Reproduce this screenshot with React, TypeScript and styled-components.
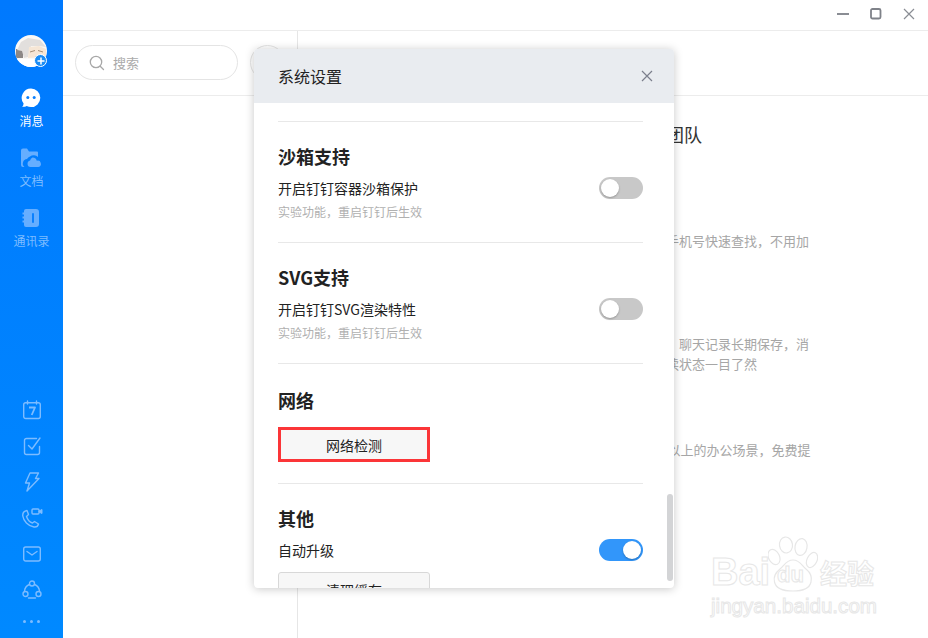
import React from 'react'
import styled, { createGlobalStyle } from 'styled-components'

const GlobalStyle = createGlobalStyle`
  html, body {
    margin: 0;
    padding: 0;
    height: 100%;
    background: #fff;
  }
  body {
    font-family: 'Noto Sans CJK SC', 'Noto Sans', sans-serif;
    color: #222;
    overflow: hidden;
  }
  * {
    box-sizing: border-box;
  }
`

const Window = styled.div`
  position: relative;
  display: flex;
  width: 928px;
  height: 638px;
  overflow: hidden;
  background: #fff;
`

const Sidebar = styled.aside`
  width: 63px;
  flex-shrink: 0;
  display: flex;
  flex-direction: column;
  align-items: center;
  justify-content: space-between;
  padding-top: 35px;
  background: linear-gradient(180deg, #0079fe 0%, #0089ff 100%);
`

const SideTop = styled.div`
  display: flex;
  flex-direction: column;
  align-items: center;
`

const AvatarWrap = styled.div`
  position: relative;
  width: 32px;
  height: 32px;
  margin-bottom: 21px;
`

const AvatarBadge = styled.span`
  position: absolute;
  right: 0;
  bottom: 0;
  width: 13px;
  height: 13px;
  border-radius: 50%;
  background: #1a8cf5;
  border: 1.5px solid #fff;
  display: flex;
  align-items: center;
  justify-content: center;
`

const NavItem = styled.div<{ $active?: boolean }>`
  display: flex;
  flex-direction: column;
  align-items: center;
  height: 60px;
  font-size: 12px;
  line-height: 18px;
  color: ${(p) => (p.$active ? '#fff' : '#7dbcff')};
  svg {
    display: block;
    margin-bottom: 4px;
  }
`

const ToolList = styled.div`
  display: flex;
  flex-direction: column;
  align-items: center;
  padding-bottom: 4px;
`

const Tool = styled.div`
  width: 63px;
  height: 36px;
  display: flex;
  align-items: center;
  justify-content: center;
`

const Dots = styled.div`
  height: 26px;
  display: flex;
  align-items: center;
  gap: 4px;
  span {
    width: 3px;
    height: 3px;
    border-radius: 50%;
    background: #7dbcff;
  }
`

const Content = styled.div`
  flex: 1;
  display: flex;
  flex-direction: column;
`

const TitleBar = styled.div`
  height: 31px;
  flex-shrink: 0;
  display: flex;
  justify-content: flex-end;
  align-items: center;
  gap: 17px;
  padding: 0 11px 3px 0;
  border-bottom: 1px solid #ececec;
`

const WinButton = styled.div`
  width: 16px;
  height: 16px;
  display: flex;
  align-items: center;
  justify-content: center;
`

const Panels = styled.div`
  flex: 1;
  display: flex;
  min-height: 0;
`

const ChatList = styled.div`
  width: 235px;
  flex-shrink: 0;
  border-right: 1px solid #e6e6e6;
`

const SearchRow = styled.div`
  height: 65px;
  display: flex;
  align-items: flex-start;
  gap: 12px;
  padding: 14px 0 0 12px;
  border-bottom: 1px solid #ececec;
  margin-right: -1px;
`

const SearchBox = styled.div`
  width: 163px;
  height: 35px;
  display: flex;
  align-items: center;
  gap: 8px;
  padding-left: 13px;
  border: 1px solid #e4e4e4;
  border-radius: 18px;
  font-size: 13px;
  color: #aaa;
`

const RoundButton = styled.div`
  width: 35px;
  height: 35px;
  border-radius: 50%;
  border: 1px solid #e4e4e4;
  flex-shrink: 0;
`

const MainPanel = styled.main`
  flex: 1;
  display: flex;
  flex-direction: column;
`

const MainHeader = styled.div`
  height: 65px;
  flex-shrink: 0;
  border-bottom: 1px solid #ececec;
`

const MainBody = styled.div`
  padding: 24px 0 0 290px;
`

const MainTitle = styled.h2`
  margin: 0 0 83px 6px;
  font-size: 18px;
  font-weight: 400;
  line-height: 28px;
  color: #333;
  white-space: nowrap;
`

const Paragraph = styled.p<{ $gap: number }>`
  margin: 0 0 ${(p) => p.$gap}px;
  font-size: 13px;
  line-height: 20px;
  color: #a6a6a6;
  white-space: nowrap;
`

const Modal = styled.section`
  position: absolute;
  left: 254px;
  top: 49px;
  width: 420px;
  height: 539px;
  display: flex;
  flex-direction: column;
  background: #fff;
  border-radius: 4px;
  box-shadow: 0 1px 10px rgba(0, 0, 0, 0.22);
  overflow: hidden;
`

const ModalHeader = styled.header`
  height: 54px;
  flex-shrink: 0;
  display: flex;
  align-items: center;
  justify-content: space-between;
  padding: 0 21px 1px 24px;
  background: #e9ecf0;
  font-size: 16px;
  color: #222;
`

const ModalBody = styled.div`
  flex: 1;
  min-height: 0;
  overflow: hidden;
  padding: 18px 31px 0 24px;
`

const Section = styled.div<{ $height: number; $pad?: number }>`
  height: ${(p) => p.$height}px;
  border-top: 1px solid #e8e8e8;
  padding-top: ${(p) => p.$pad ?? 20}px;
`

const SectionTitle = styled.h3`
  margin: 0;
  font-size: 18px;
  font-weight: 700;
  line-height: 28px;
  color: #222;
`

const OptionRow = styled.div`
  display: flex;
  align-items: center;
  justify-content: space-between;
  margin-top: 7px;
  height: 22px;
  font-size: 14px;
  color: #222;
`

const Hint = styled.div`
  margin-top: 4px;
  font-size: 12px;
  line-height: 18px;
  color: #b0b0b0;
`

const Switch = styled.span<{ $on?: boolean }>`
  position: relative;
  width: 44px;
  height: 22px;
  border-radius: 11px;
  background: ${(p) => (p.$on ? '#3296fa' : '#c8c8c8')};
  &::after {
    content: '';
    position: absolute;
    top: 2px;
    left: ${(p) => (p.$on ? '24px' : '2px')};
    width: 18px;
    height: 18px;
    border-radius: 50%;
    background: #fff;
    box-shadow: 0 1px 2px rgba(0, 0, 0, 0.25);
  }
`

const ActionButton = styled.div<{ $marked?: boolean }>`
  width: 152px;
  height: 35px;
  display: flex;
  align-items: center;
  justify-content: center;
  background: #f7f7f7;
  font-size: 14px;
  color: #222;
  border: ${(p) => (p.$marked ? '3px solid #fb3538' : '1px solid #d8d8d8')};
  border-radius: ${(p) => (p.$marked ? '0' : '3px')};
`

const NetworkButton = styled(ActionButton)`
  margin-top: 13px;
`

const CacheButton = styled(ActionButton)`
  margin-top: 11px;
`

const ScrollThumb = styled.div`
  position: absolute;
  right: 1px;
  top: 445px;
  width: 6px;
  height: 87px;
  border-radius: 3px;
  background: #d3d4d6;
`

const Watermark = styled.div`
  position: absolute;
  left: 711px;
  top: 536px;
  width: 168px;
  display: flex;
  flex-direction: column;
  color: #fff;
  -webkit-text-stroke: 1px #e7e7e7;
  pointer-events: none;
`

const MarkTop = styled.div`
  display: flex;
  align-items: flex-end;
  height: 58px;
`

const MarkBai = styled.span`
  font-family: 'Liberation Sans', sans-serif;
  font-size: 38px;
  font-weight: 700;
  line-height: 43px;
  width: 57px;
  white-space: nowrap;
`

const Paw = styled.div`
  position: relative;
  width: 50px;
  height: 58px;
  flex-shrink: 0;
`

const MarkDu = styled.span`
  position: absolute;
  left: 9px;
  bottom: 6px;
  font-family: 'Liberation Sans', sans-serif;
  font-size: 22px;
  font-weight: 700;
  line-height: 26px;
`

const MarkName = styled.span`
  font-size: 27px;
  font-weight: 700;
  line-height: 42px;
  margin-left: 2px;
  white-space: nowrap;
`

const MarkUrl = styled.span`
  font-family: 'Liberation Sans', sans-serif;
  font-size: 20.6px;
  line-height: 24px;
  white-space: nowrap;
`

const Avatar = () => (
  <svg width="32" height="32" viewBox="0 0 32 32">
    <defs>
      <clipPath id="avatar-clip">
        <circle cx="16" cy="16" r="16" />
      </clipPath>
    </defs>
    <g clipPath="url(#avatar-clip)">
      <rect width="32" height="32" fill="#fbf9f6" />
      <rect x="1" y="14" width="7" height="9" fill="#8d8886" />
      <path d="M2 15 L6 7 L13 3 L25 5 L31 12 L24 11 L16 11 L13 22 L9 23 L7 16 Z" fill="#e2dfdd" />
      <path d="M14 12 L24 11 L31 14 L31 22 L13 23 Z" fill="#f6e6d5" />
      <path d="M15 17 L20 15.500 M23 15.500 L28 17" stroke="#a58d76" strokeWidth="1" fill="none" />
      <rect y="24" width="32" height="8" fill="#fff" />
    </g>
  </svg>
)

const MessageIcon = () => (
  <svg width="20" height="20" viewBox="0 0 20 20">
    <path
      d="M10 .5a9.300 9.300 0 0 1 0 18.600c-1.600 0-3-.3-4.300-1-1.200.6-2.600.9-4.500.9.800-1 1.300-2.200 1.400-3.600A9.300 9.300 0 0 1 10 .5z"
      fill="#fff"
    />
    <circle cx="6.800" cy="9.500" r="1.500" fill="#0a80fe" />
    <circle cx="13.200" cy="9.500" r="1.500" fill="#0a80fe" />
  </svg>
)

const DocsIcon = () => (
  <svg width="21" height="20" viewBox="0 0 21 20">
    <path
      d="M0 2.500A2 2 0 0 1 2 .5h4l2 3h8a1 1 0 0 1 1 1V9a6 6 0 0 0-8-.5 5 5 0 0 0-3 2.500 4.500 4.500 0 0 0-2.500 8H2a2 2 0 0 1-2-2z"
      fill="#66aeff"
    />
    <path
      d="M11.500 9.500a4.500 4.500 0 0 1 4.300 3.200A3.200 3.200 0 0 1 17.500 19h-8a3.300 3.300 0 0 1-.4-6.500 4.500 4.500 0 0 1 2.400-3z"
      fill="#66aeff"
    />
  </svg>
)

const ContactsIcon = () => (
  <svg width="20" height="20" viewBox="0 0 20 20">
    <path
      d="M5 1h10a3 3 0 0 1 3 3v12a3 3 0 0 1-3 3H5a2 2 0 0 1-2-2v-2.500H1.500v-2H3v-2H1.500v-2H3v-2H1.500v-2H3V3a2 2 0 0 1 2-2z"
      fill="#66aeff"
    />
    <rect x="11" y="5" width="2" height="10" rx="1" fill="#0a80fe" />
  </svg>
)

const toolStroke = {
  fill: 'none',
  stroke: '#7dbcff',
  strokeWidth: 1.4,
  strokeLinecap: 'round' as const,
  strokeLinejoin: 'round' as const,
}

const CalendarIcon = () => (
  <svg width="20" height="20" viewBox="0 0 20 20">
    <rect x="1.700" y="2.700" width="16.600" height="15.800" rx="2" {...toolStroke} />
    <path d="M5.500 1v3M14.500 1v3" {...toolStroke} />
    <path d="M7 7.500h6l-3.300 7.500" {...toolStroke} strokeWidth={1.800} strokeLinecap="butt" />
  </svg>
)

const TaskIcon = () => (
  <svg width="20" height="20" viewBox="0 0 20 20">
    <path d="M17.500 10.500v6a2 2 0 0 1-2 2h-11a2 2 0 0 1-2-2v-12a2 2 0 0 1 2-2h10" {...toolStroke} />
    <path d="M6.500 9.500l3.500 3.500 8-11" {...toolStroke} />
  </svg>
)

const BoltIcon = () => (
  <svg width="20" height="20" viewBox="0 0 20 20">
    <path d="M8 1h8.500l-3 5.500H17L5 19l2.500-8H3.500z" {...toolStroke} />
  </svg>
)

const CallIcon = () => (
  <svg width="22" height="20" viewBox="0 0 22 20">
    <path
      d="M6 2.500C3 3 1.500 5 1.800 8 2.500 13 7 18 13 19c2.500.3 4-1 4.500-3l-4-2.500-2 1.500c-3-1-5-3.500-6-6.500l2-2z"
      {...toolStroke}
    />
    <rect x="11" y="1" width="7" height="5" rx="1" {...toolStroke} />
    <path d="M18 3l3-1.500v4L18 4z" fill="#7dbcff" stroke="#7dbcff" />
  </svg>
)

const MailIcon = () => (
  <svg width="20" height="18" viewBox="0 0 20 18">
    <rect x="1.700" y="2" width="16.600" height="14" rx="2" {...toolStroke} />
    <path d="M5 6.500l5 3.500 5-3.500" {...toolStroke} />
  </svg>
)

const OrgIcon = () => (
  <svg width="20" height="20" viewBox="0 0 20 20">
    <circle cx="10" cy="3.500" r="2.500" {...toolStroke} />
    <circle cx="3.500" cy="14" r="2.500" {...toolStroke} />
    <circle cx="16.500" cy="14" r="2.500" {...toolStroke} />
    <path d="M7.300 4.500A8 8 0 0 0 2.500 11M12.700 4.500A8 8 0 0 1 17.500 11M6.500 18h7" {...toolStroke} />
  </svg>
)

const SearchIcon = () => (
  <svg width="16" height="16" viewBox="0 0 16 16" fill="none" stroke="#a8a8a8" strokeWidth="1.300">
    <circle cx="7" cy="7" r="5.700" />
    <path d="M11.200 11.200L14.500 14.500" strokeLinecap="round" />
  </svg>
)

const CloseIcon = ({ color = '#7b7f8c' }: { color?: string }) => (
  <svg width="12" height="12" viewBox="0 0 12 12" fill="none" stroke={color} strokeWidth="1.200">
    <path d="M1 1l10 10M11 1L1 11" />
  </svg>
)

const PawMark = () => (
  <svg width="50" height="58" viewBox="0 0 50 58" fill="#fff" stroke="#e7e7e7" strokeWidth="1.200">
    <ellipse cx="18" cy="9" rx="6.500" ry="8" transform="rotate(-8 18 9)" />
    <ellipse cx="33" cy="11" rx="6" ry="8.500" transform="rotate(10 33 11)" />
    <ellipse cx="6" cy="21" rx="5.500" ry="8" transform="rotate(-25 6 21)" />
    <ellipse cx="44" cy="24" rx="5" ry="8" transform="rotate(25 44 24)" />
    <path d="M25 24c7 0 9 6 13 9 5 4 6 9 5 13-1.500 7-8 9-18 9s-17-2-18.500-9c-1-4 .5-9 5.500-13 4-3 6-9 13-9z" />
  </svg>
)

const nav = [
  { label: '消息', icon: <MessageIcon />, active: true },
  { label: '文档', icon: <DocsIcon /> },
  { label: '通讯录', icon: <ContactsIcon /> },
]

const tools = [
  <CalendarIcon key="calendar" />,
  <TaskIcon key="task" />,
  <BoltIcon key="bolt" />,
  <CallIcon key="call" />,
  <MailIcon key="mail" />,
  <OrgIcon key="org" />,
]

const App: React.FC = () => (
  <>
    <GlobalStyle />
    <Window>
      <Sidebar>
        <SideTop>
          <AvatarWrap>
            <Avatar />
            <AvatarBadge>
              <svg width="8" height="8" viewBox="0 0 8 8" stroke="#fff" strokeWidth="1.500">
                <path d="M4 .5v7M.5 4h7" />
              </svg>
            </AvatarBadge>
          </AvatarWrap>
          {nav.map((item) => (
            <NavItem key={item.label} $active={item.active}>
              {item.icon}
              {item.label}
            </NavItem>
          ))}
        </SideTop>
        <ToolList>
          {tools.map((icon) => (
            <Tool key={icon.key}>{icon}</Tool>
          ))}
          <Dots>
            <span />
            <span />
            <span />
          </Dots>
        </ToolList>
      </Sidebar>

      <Content>
        <TitleBar>
          <WinButton>
            <svg width="12" height="12" viewBox="0 0 12 12">
              <rect y="5" width="12" height="2" fill="#8a8d94" />
            </svg>
          </WinButton>
          <WinButton>
            <svg width="12" height="12" viewBox="0 0 12 12">
              <rect x="1" y="1" width="9.500" height="9.500" rx="1.500" fill="none" stroke="#7f8289" strokeWidth="1.800" />
            </svg>
          </WinButton>
          <WinButton>
            <CloseIcon color="#8a8d94" />
          </WinButton>
        </TitleBar>
        <Panels>
          <ChatList>
            <SearchRow>
              <SearchBox>
                <SearchIcon />
                搜索
              </SearchBox>
              <RoundButton />
            </SearchRow>
          </ChatList>
          <MainPanel>
            <MainHeader />
            <MainBody>
              <MainTitle>创建你的团队</MainTitle>
              <Paragraph $gap={83}>可以通过成员手机号快速查找，不用加</Paragraph>
              <Paragraph $gap={0}>消息已读未读，聊天记录长期保存，消</Paragraph>
              <Paragraph $gap={66}>息发送后的已读状态一目了然</Paragraph>
              <Paragraph $gap={0}>可适用于10人以上的办公场景，免费提</Paragraph>
            </MainBody>
          </MainPanel>
        </Panels>
      </Content>

      <Modal>
        <ModalHeader>
          系统设置
          <CloseIcon />
        </ModalHeader>
        <ModalBody>
          <Section $height={121}>
            <SectionTitle>沙箱支持</SectionTitle>
            <OptionRow>
              开启钉钉容器沙箱保护
              <Switch />
            </OptionRow>
            <Hint>实验功能，重启钉钉后生效</Hint>
          </Section>
          <Section $height={121}>
            <SectionTitle>SVG支持</SectionTitle>
            <OptionRow>
              开启钉钉SVG渲染特性
              <Switch />
            </OptionRow>
            <Hint>实验功能，重启钉钉后生效</Hint>
          </Section>
          <Section $height={120} $pad={22}>
            <SectionTitle>网络</SectionTitle>
            <NetworkButton $marked>网络检测</NetworkButton>
          </Section>
          <Section $height={120}>
            <SectionTitle>其他</SectionTitle>
            <OptionRow>
              自动升级
              <Switch $on />
            </OptionRow>
            <CacheButton>清理缓存</CacheButton>
          </Section>
        </ModalBody>
        <ScrollThumb />
      </Modal>

      <Watermark>
        <MarkTop>
          <MarkBai>Bai</MarkBai>
          <Paw>
            <PawMark />
            <MarkDu>du</MarkDu>
          </Paw>
          <MarkName>经验</MarkName>
        </MarkTop>
        <MarkUrl>jingyan.baidu.com</MarkUrl>
      </Watermark>
    </Window>
  </>
)

export default App
